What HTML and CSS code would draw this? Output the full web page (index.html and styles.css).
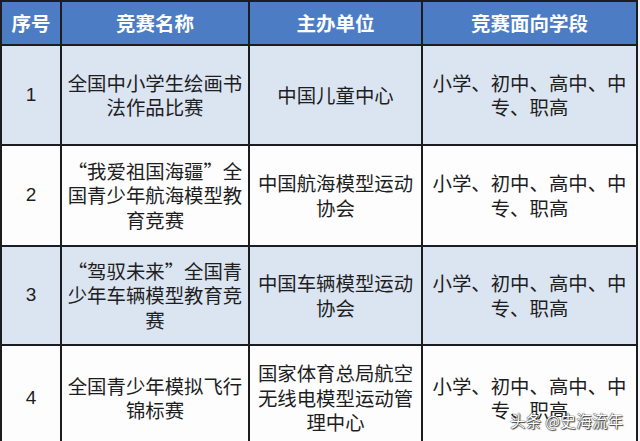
FILE: index.html
```html
<!DOCTYPE html>
<html lang="zh">
<head>
<meta charset="utf-8">
<link rel="stylesheet" href="styles.css">
</head>
<body>
<div class="page">
  <div class="table">
    <div class="cell head">序号</div>
    <div class="cell head">竞赛名称</div>
    <div class="cell head">主办单位</div>
    <div class="cell head">竞赛面向学段</div>

    <div class="cell odd num">1</div>
    <div class="cell odd">全国中小学生绘画书法作品比赛</div>
    <div class="cell odd">中国儿童中心</div>
    <div class="cell odd">小学、初中、高中、中专、职高</div>

    <div class="cell even num">2</div>
    <div class="cell even">“我爱祖国海疆”全国青少年航海模型教育竞赛</div>
    <div class="cell even">中国航海模型运动协会</div>
    <div class="cell even">小学、初中、高中、中专、职高</div>

    <div class="cell odd num">3</div>
    <div class="cell odd">“驾驭未来”全国青少年车辆模型教育竞赛</div>
    <div class="cell odd">中国车辆模型运动协会</div>
    <div class="cell odd">小学、初中、高中、中专、职高</div>

    <div class="cell even num">4</div>
    <div class="cell even">全国青少年模拟飞行锦标赛</div>
    <div class="cell even">国家体育总局航空无线电模型运动管理中心</div>
    <div class="cell even">小学、初中、高中、中专、职高</div>
  </div>
  <div class="watermark">头条 @史海流年</div>
</div>
</body>
</html>
```

FILE: styles.css
```css
html, body {
  margin: 0;
  padding: 0;
  background: #f4f5f7;
}
.page {
  position: relative;
  width: 640px;
  height: 441px;
  overflow: hidden;
}
.table {
  width: 638px;
  display: grid;
  grid-template-columns: 58px 186px 171px 213px;
  grid-template-rows: 42px 98px 99px 97px 104px;
  gap: 2px;
  padding: 2px;
  box-sizing: border-box;
  background: #1b1d21;
  font-family: "Noto Sans CJK SC", "Noto Sans", sans-serif;
  font-size: 19.4px;
  line-height: 24.5px;
  color: #1e1e1e;
}
.cell {
  display: flex;
  align-items: center;
  justify-content: center;
  text-align: center;
  padding: 0 4px;
}
.head {
  background: #4c7dc4;
  color: #ffffff;
  font-weight: bold;
  font-size: 19.5px;
}
.odd { background: #dbe4f1; }
.even { background: #fdfdfe; }
.num {
  font-family: "Liberation Sans", Arial, sans-serif;
  font-size: 19px;
}
.watermark {
  position: absolute;
  left: 510px;
  top: 409px;
  font-family: "Noto Sans CJK SC", sans-serif;
  font-size: 15.5px;
  color: #ffffff;
  text-shadow: 0 0 1px #333, 0 0 1px #333, 1px 1px 1px #444;
  letter-spacing: 0.3px;
}
```
